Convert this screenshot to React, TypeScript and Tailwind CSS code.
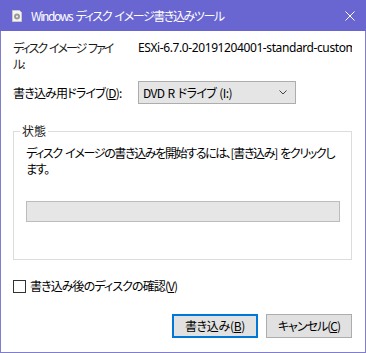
import React from "react";

// Windows 10 style "Disc Image Burner" dialog
export default function App() {
  const font = "[font-family:'Noto_Sans_CJK_JP',sans-serif] [font-feature-settings:'palt'] [word-spacing:2px]";

  return (
    <div className={`w-[366px] h-[353px] flex flex-col bg-white text-[12px] leading-[16px] text-black ${font}`}>
      {/* Title bar */}
      <div className="h-[31px] shrink-0 flex items-center bg-[#6966d1] text-white">
        <svg className="ml-[11px] w-[12px] h-[12px]" viewBox="0 0 12 12">
          <path d="M1.5 0.5h7l2 2v9h-9z" fill="#f4f4f4" stroke="#c9c9c9" />
          <circle cx="6" cy="6.5" r="3" fill="#9a9a9a" />
          <circle cx="6" cy="6.5" r="1" fill="#f4f4f4" />
        </svg>
        <span className="ml-[8px] flex-1 whitespace-nowrap tracking-[-1.4px]">Windows ディスク イメージ書き込みツール</span>
        <svg className="mr-[11px] w-[10px] h-[10px]" viewBox="0 0 10 10">
          <path d="M0.5 0.5l9 9M9.5 0.5l-9 9" stroke="#fff" strokeWidth="1" />
        </svg>
      </div>

      {/* Body */}
      <div className="flex-1 flex flex-col border-x border-b border-[#7f7dcc] pl-[12px] pr-[13px] pt-[9px]">
        <div className="flex">
          <div className="w-[125px] shrink-0 text-[#1a1a1a] tracking-[-2px]">
            ディスク イメージ ファイ<br />ル:
          </div>
          <div className="flex-1 overflow-hidden whitespace-nowrap tracking-[-0.4px] [word-spacing:0px] [font-family:'Noto_Sans',sans-serif]">
            ESXi-6.7.0-20191204001-standard-customized.iso
          </div>
        </div>

        <div className="flex items-center mt-[9px]">
          <div className="w-[125px] shrink-0 whitespace-nowrap tracking-[-0.8px]">
            書き込み用ドライブ(<span className="underline">D</span>):
          </div>
          <div className="w-[158px] h-[23px] flex items-center justify-between bg-[#e5e5e5] border border-[#adadad] pl-[4px] pr-[8px]">
            <span className="whitespace-nowrap tracking-[-0.6px] [word-spacing:1px]">DVD R ドライブ (I:)</span>
            <svg className="w-[8px] h-[5px]" viewBox="0 0 8 5">
              <path d="M0.5 0.5l3.5 3.5 3.5-3.5" fill="none" stroke="#444" strokeWidth="1" />
            </svg>
          </div>
        </div>

        {/* Status group */}
        <fieldset className="mt-[19px] border border-[#dcdcdc] pl-[12px] pr-[11px] pb-[37px]">
          <legend className="ml-[-6px] px-[2px] text-[#1a1a1a]">状態</legend>
          <p className="mt-[6px] whitespace-nowrap tracking-[-1.35px]">
            ディスク イメージの書き込みを開始するには、[書き込み] をクリックし<br />ます。
          </p>
          <div className="mt-[24px] h-[21px] bg-[#e6e6e6] border border-[#bcbcbc]" />
        </fieldset>

        <label className="mt-[18px] flex items-center">
          <span className="w-[13px] h-[13px] border border-[#333] bg-white" />
          <span className="ml-[4px] whitespace-nowrap tracking-[-0.9px]">
            書き込み後のディスクの確認(<span className="underline">V</span>)
          </span>
        </label>

        <div className="mt-[20px] flex justify-end gap-[8px]">
          <button className="w-[86px] h-[24px] bg-[#e1e1e1] border-2 border-[#0078d7] tracking-[-0.3px]">
            書き込み(<span className="underline">B</span>)
          </button>
          <button className="w-[86px] h-[24px] bg-[#e1e1e1] border border-[#adadad] tracking-[-1px]">
            キャンセル(<span className="underline">C</span>)
          </button>
        </div>
      </div>
    </div>
  );
}
